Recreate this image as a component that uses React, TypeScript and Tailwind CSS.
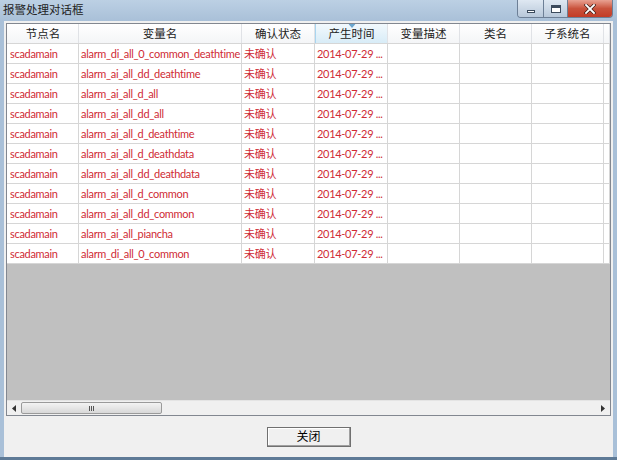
import { ReactNode } from "react";

type Col = { key: string; title: string; width: number };

const columns: Col[] = [
  { key: "node", title: "节点名", width: 71 },
  { key: "var", title: "变量名", width: 163 },
  { key: "state", title: "确认状态", width: 73 },
  { key: "time", title: "产生时间", width: 73 },
  { key: "desc", title: "变量描述", width: 72 },
  { key: "cls", title: "类名", width: 72 },
  { key: "sub", title: "子系统名", width: 72 },
];

const varNames = [
  "alarm_di_all_0_common_deathtime",
  "alarm_ai_all_dd_deathtime",
  "alarm_ai_all_d_all",
  "alarm_ai_all_dd_all",
  "alarm_ai_all_d_deathtime",
  "alarm_ai_all_d_deathdata",
  "alarm_ai_all_dd_deathdata",
  "alarm_ai_all_d_common",
  "alarm_ai_all_dd_common",
  "alarm_ai_all_piancha",
  "alarm_di_all_0_common",
];

const font = "font-['Lato','Noto_Sans_CJK_SC',sans-serif]";

function Cell({ width, children }: { width: number; children?: ReactNode }) {
  return (
    <div
      className="h-5 shrink-0 overflow-hidden whitespace-nowrap border-r border-b border-[#d6d6d6] pl-[2px] text-[11px] leading-[19px] tracking-[-0.3px] text-[#cf2b35]"
      style={{ width }}
    >
      {children}
    </div>
  );
}

function TitleBar() {
  return (
    <div className="flex h-[21px] items-start bg-gradient-to-b from-[#bcd0e4] to-[#a9c0d8]">
      <div className="pl-[3px] pt-[2px] text-[11.5px] leading-[16px] text-[#222]">报警处理对话框</div>
      <div className="ml-auto mr-[4px] flex h-[18px] overflow-hidden rounded-b-[4px] border border-t-0 border-[#6d7f96]">
        <div className="flex w-[26px] items-center justify-center border-r border-[#6d7f96] bg-gradient-to-b from-[#dfe8f2] to-[#b8c8da]">
          <div className="mt-[5px] h-[3px] w-[8px] border border-[#3b4a5c] bg-white" />
        </div>
        <div className="flex w-[24px] items-center justify-center border-r border-[#6d7f96] bg-gradient-to-b from-[#dfe8f2] to-[#b8c8da]">
          <div className="h-[8px] w-[10px] border border-[#3b4a5c] border-t-[3px] bg-white" />
        </div>
        <div className="flex w-[44px] items-center justify-center bg-gradient-to-b from-[#e8a192] via-[#c9523c] to-[#c23b26]">
          <svg width="12" height="10" viewBox="0 0 12 10">
            <path d="M2 1 L10 9 M10 1 L2 9" stroke="#3a1a14" strokeWidth="3.2" strokeLinecap="square" />
            <path d="M2 1 L10 9 M10 1 L2 9" stroke="#ffffff" strokeWidth="1.8" strokeLinecap="square" />
          </svg>
        </div>
      </div>
    </div>
  );
}

function Header() {
  return (
    <div className="flex h-[20px] border-b border-[#d6d6d6] bg-gradient-to-b from-white to-[#f4f5f7]">
      <div className="w-[1px] shrink-0" />
      {columns.map((c) => (
        <div
          key={c.key}
          className={`relative flex shrink-0 items-center justify-center border-r border-[#e0e2e6] text-[11.5px] text-[#222] ${
            c.key === "time" ? "bg-gradient-to-b from-[#f2f9fd] to-[#d8ecf7] border-l border-l-[#a9d5ef]" : ""
          }`}
          style={{ width: c.width }}
        >
          {c.key === "time" ? (
            <svg className="absolute left-1/2 top-0 -translate-x-1/2" width="7" height="4" viewBox="0 0 7 4">
              <path d="M0 0 L7 0 L3.5 4 Z" fill="#6aa6cf" />
            </svg>
          ) : null}
          {c.title}
        </div>
      ))}
      <div className="w-[6px] shrink-0 border-r border-[#e0e2e6]" />
    </div>
  );
}

function ScrollBar() {
  return (
    <div className="flex h-[15px] items-stretch border-t border-[#e4e4e4] bg-[#f0f0f0]">
      <div className="flex w-[14px] items-center justify-center">
        <svg width="4" height="7" viewBox="0 0 4 7">
          <path d="M4 0 L0 3.5 L4 7 Z" fill="#333" />
        </svg>
      </div>
      <div className="my-[1px] flex w-[141px] items-center justify-center rounded-[2px] border border-[#9a9a9a] bg-gradient-to-b from-[#f3f3f3] to-[#d8d8d8]">
        <div className="flex gap-[1px]">
          <div className="h-[5px] w-[1px] bg-[#555]" />
          <div className="h-[5px] w-[1px] bg-[#555]" />
          <div className="h-[5px] w-[1px] bg-[#555]" />
        </div>
      </div>
      <div className="flex-1" />
      <div className="flex w-[14px] items-center justify-center">
        <svg width="4" height="7" viewBox="0 0 4 7">
          <path d="M0 0 L4 3.5 L0 7 Z" fill="#333" />
        </svg>
      </div>
    </div>
  );
}

function Row({ name }: { name: string }) {
  return (
    <div className="flex w-max bg-white">
      <div className="w-[1px] shrink-0 border-b border-[#d6d6d6]" />
      <Cell width={71}>scadamain</Cell>
      <Cell width={163}>{name}</Cell>
      <Cell width={73}>未确认</Cell>
      <Cell width={73}>2014-07-29 ...</Cell>
      <Cell width={72} />
      <Cell width={72} />
      <Cell width={72} />
      <Cell width={6} />
    </div>
  );
}

export default function App() {
  return (
    <div className={`h-[460px] w-[617px] overflow-hidden bg-[#a9c0d8] ${font}`}>
      <TitleBar />
      <div className="mx-[4px] flex h-[436px] flex-col bg-[#f0f0f0] pt-[2px]">
        <div className="mx-[2px] flex h-[393px] flex-col border border-[#828790] bg-[#c0c0c0]">
          <div className="flex-1 overflow-hidden">
            <Header />
            {varNames.map((v, i) => (
              <Row key={v + i} name={v} />
            ))}
          </div>
          <ScrollBar />
        </div>
        <div className="flex flex-1 items-start justify-center pt-[11px]">
          <button
            type="button"
            className="h-[20px] w-[84px] border border-[#707070] bg-[#f0f0f0] text-[12px] leading-[16px] text-black shadow-[inset_-1px_-1px_0_#a0a0a0,inset_1px_1px_0_#ffffff]"
          >
            关闭
          </button>
        </div>
      </div>
      <div className="h-[3px] bg-[#5e7a96]" />
    </div>
  );
}
